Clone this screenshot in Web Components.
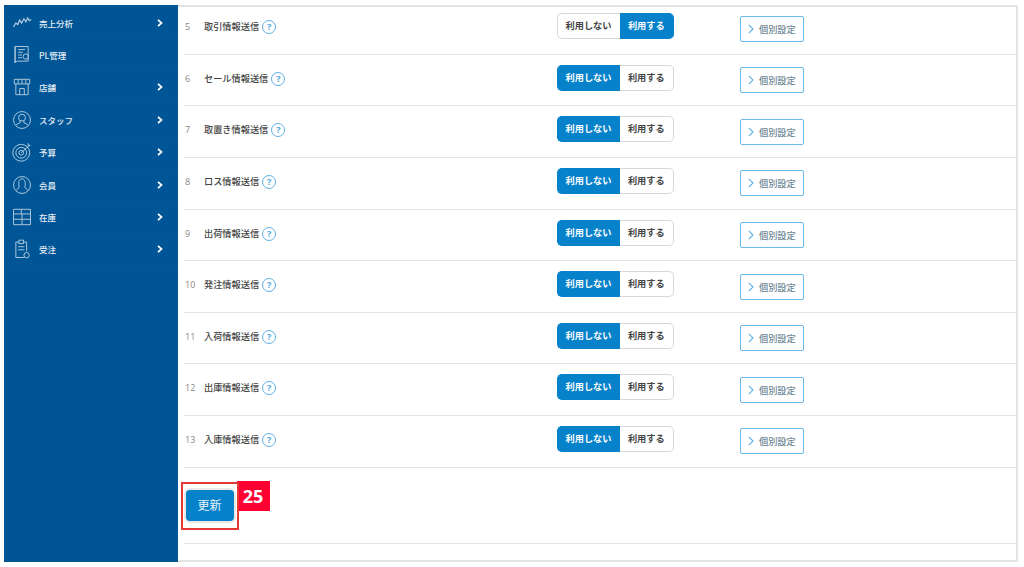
<!DOCTYPE html>
<html lang="ja">
<head>
<meta charset="utf-8">
<title>設定</title>
<style>
html, body { margin: 0; background: #fff; }
body { font-family: "Noto Sans CJK JP", "Noto Sans", sans-serif; }
</style>
</head>
<body>
<app-shell>
    <side-nav slot="nav">
        <nav-item label="売上分析" icon="sales" arrow></nav-item>
        <nav-item label="PL管理" icon="pl"></nav-item>
        <nav-item label="店舗" icon="shop" arrow></nav-item>
        <nav-item label="スタッフ" icon="staff" arrow></nav-item>
        <nav-item label="予算" icon="target" arrow></nav-item>
        <nav-item label="会員" icon="member" arrow></nav-item>
        <nav-item label="在庫" icon="stock" arrow></nav-item>
        <nav-item label="受注" icon="order" arrow></nav-item>
    </side-nav>
    <setting-row num="5" label="取引情報送信" on></setting-row>
    <setting-row num="6" label="セール情報送信"></setting-row>
    <setting-row num="7" label="取置き情報送信"></setting-row>
    <setting-row num="8" label="ロス情報送信"></setting-row>
    <setting-row num="9" label="出荷情報送信"></setting-row>
    <setting-row num="10" label="発注情報送信"></setting-row>
    <setting-row num="11" label="入荷情報送信"></setting-row>
    <setting-row num="12" label="出庫情報送信"></setting-row>
    <setting-row num="13" label="入庫情報送信"></setting-row>
    <update-bar></update-bar>
</app-shell>

<script>
const ICONS = {
    sales: '<path d="M2 18l3-5 2.500 2 2.500-6 2.500 4 3-5.500 2.500 4 2.500-5 2 3.500 2.500-1.500" stroke-width="1.500"/>',
    pl: '<path d="M4 2h17v19H7l-3 2zM4 2v21"/><path d="M8 6h9M8 9.500h6M8 13h5M8 16.500h5"/><circle cx="18" cy="15" r="3.500"/>',
    shop: '<path d="M3 3h20v6H3zM5 9v14h16V9M8 3v6M13 3v6M18 3v6M10 23v-8h6v8"/>',
    staff: '<circle cx="13" cy="13" r="11"/><circle cx="13" cy="10" r="4.500"/><path d="M10.500 14v2.500l-5 2.500M15.500 14v2.500l5 2.500"/>',
    target: '<circle cx="12" cy="14" r="11"/><circle cx="12" cy="14" r="7"/><circle cx="12" cy="14" r="3"/><path d="M12 14L23 4M21 1.500v3h3"/>',
    member: '<circle cx="13" cy="13" r="11"/><path d="M9.500 16c-1.500-4.500-1-11 3.500-11s5 6.500 3.500 11l4 3.500M9.500 16l-4 3.500"/>',
    stock: '<path d="M2 3h22v20H2zM2 9h22M2 16h22M12 3v6M13 9v7M13 16v7"/>',
    order: '<path d="M9 4H5v20h11M15 4h4v12M9 1.500h6V6H9zM8 10h8M8 14h8"/><circle cx="19" cy="21" r="3.500"/>'
};

class AppShell extends HTMLElement {
    constructor() {
        super();
        this.attachShadow({ mode: 'open' });
        this.shadowRoot.innerHTML = `
            <style>
            :host {
                display: flex;
                box-sizing: border-box;
                width: 1014px;
                height: 557px;
                margin: 5px 0 0 4px;
                border: 2px solid #e4e4e4;
                border-left: 0;
            }
            .nav { flex: 0 0 173.500px; margin: -2px 0; display: flex; }
            .main {
                flex: 1;
                min-width: 0;
                overflow: hidden;
                padding-left: 6.500px;
            }
            .list { margin-top: -3.8px; }
            </style>
            <div class="nav"><slot name="nav"></slot></div>
            <div class="main"><div class="list"><slot></slot></div></div>
        `;
    }
}

class SideNav extends HTMLElement {
    constructor() {
        super();
        this.attachShadow({ mode: 'open' });
        this.shadowRoot.innerHTML = `
            <style>
            :host {
                display: block;
                flex: 1;
                background: #005596;
                padding-top: 2px;
            }
            </style>
            <slot></slot>
        `;
    }
}

class NavItem extends HTMLElement {
    constructor() {
        super();
        this.attachShadow({ mode: 'open' });
        this.shadowRoot.innerHTML = `
            <style>
            :host {
                display: flex;
                align-items: center;
                box-sizing: border-box;
                height: 32.400px;
                padding: 0 15px 0 8px;
                color: #e6eef5;
                font: 500 8.5px "Noto Sans CJK JP", sans-serif;
                border-bottom: 1px solid #04589a;
            }
            svg.icon { width: 20px; height: 20px; fill: none; stroke: #b9cfe0; stroke-width: 1.2; flex: none; }
            .text { margin-left: 7px; flex: 1; white-space: nowrap; }
            svg.arrow { width: 6px; height: 8px; fill: none; stroke: #fff; stroke-width: 1.7; }
            </style>
            <svg class="icon" viewBox="0 0 26 26"></svg>
            <span class="text"></span>
            <svg class="arrow" viewBox="0 0 6 8"><path d="M1 .8L4.500 4 1 7.200"/></svg>
        `;
    }

    connectedCallback() {
        this.shadowRoot.querySelector('.icon').innerHTML = ICONS[this.getAttribute('icon')];
        this.shadowRoot.querySelector('.text').textContent = this.getAttribute('label');
        this.shadowRoot.querySelector('.arrow').style.visibility = this.hasAttribute('arrow') ? 'visible' : 'hidden';
    }
}

class SettingRow extends HTMLElement {
    constructor() {
        super();
        this.attachShadow({ mode: 'open' });
        this.shadowRoot.innerHTML = `
            <style>
            :host {
                display: flex;
                align-items: flex-start;
                box-sizing: border-box;
                height: 51.6px;
                border-bottom: 1px solid #e4e4e4;
                font: 700 9.2px "Noto Sans CJK JP", sans-serif;
                color: #444;
            }
            .num { width: 20px; padding-left: 1px; box-sizing: border-box; margin-top: 17px; color: #888; font: 9px/14px "Open Sans", sans-serif; }
            .name { width: 352.500px; margin-top: 16px; height: 14px; display: flex; align-items: center; gap: 3px; white-space: nowrap; font-weight: 500; }
            .help {
                box-sizing: border-box; width: 14px; height: 14px; border: 1.5px solid #5eb0e5; border-radius: 50%;
                color: #4fa6de; font: 700 9px/11px "Open Sans", sans-serif; text-align: center; margin-top: 2px;
            }
            .toggle { display: flex; width: 117.500px; height: 26px; margin-top: 10px; margin-right: 66px; }
            .toggle span {
                box-sizing: border-box; height: 26px; line-height: 23px; text-align: center;
                border: 1.500px solid #d8d8d8; background: #fff; color: #444;
            }
            .toggle .off { width: 63px; border-radius: 5px 0 0 5px; border-right: 0; }
            .toggle .use { width: 54.500px; border-radius: 0 5px 5px 0; border-left: 0; }
            .toggle .active { background: #0582ca; border-color: #0582ca; color: #fff; }
            .detail {
                box-sizing: border-box; width: 64px; height: 26px; margin-top: 12.500px;
                border: 1.500px solid #6bb8ea; border-radius: 2px; background: #fff;
                color: #6d8795; font-weight: 500; display: flex; align-items: center; padding-left: 7px; gap: 5px; white-space: nowrap;
            }
            .detail svg { width: 6px; height: 10px; fill: none; stroke: #5eb0e5; stroke-width: 1.1; flex: none; }
            </style>
            <div class="num"></div>
            <div class="name"><span class="label"></span><span class="help">?</span></div>
            <div class="toggle"><span class="off">利用しない</span><span class="use">利用する</span></div>
            <div class="detail"><svg viewBox="0 0 6 10"><path d="M.8 .8L5 5 .8 9.200"/></svg>個別設定</div>
        `;
    }

    connectedCallback() {
        const root = this.shadowRoot;
        root.querySelector('.num').textContent = this.getAttribute('num');
        root.querySelector('.label').textContent = this.getAttribute('label');
        root.querySelector(this.hasAttribute('on') ? '.use' : '.off').classList.add('active');
    }
}

class UpdateBar extends HTMLElement {
    constructor() {
        super();
        this.attachShadow({ mode: 'open' });
        this.shadowRoot.innerHTML = `
            <style>
            :host {
                display: block;
                position: relative;
                box-sizing: border-box;
                height: 76px;
                padding: 22px 0 0 1.500px;
                border-bottom: 1px solid #e4e4e4;
            }
            button {
                display: block; box-sizing: border-box; width: 48px; height: 31px; padding: 0 0 2px;
                background: #0582ca; color: #e8f4fb; border: 0; border-radius: 4px;
                box-shadow: 0 0 0 2px #e9e9e9;
                font: 12px "Noto Sans CJK JP", sans-serif;
            }
            .mark { position: absolute; left: -3.500px; top: 14px; width: 58px; height: 48px; box-sizing: border-box; border: 2px solid #e53935; }
            .badge {
                position: absolute; left: 52.500px; top: 13px; width: 33px; height: 30px;
                background: #ff0033; color: #fff; text-align: center;
                font: 700 18px/30px "Open Sans", sans-serif;
            }
            </style>
            <button>更新</button>
            <span class="badge">25</span>
            <span class="mark"></span>
        `;
    }
}

customElements.define('app-shell', AppShell);
customElements.define('side-nav', SideNav);
customElements.define('nav-item', NavItem);
customElements.define('setting-row', SettingRow);
customElements.define('update-bar', UpdateBar);
</script>
</body>
</html>
